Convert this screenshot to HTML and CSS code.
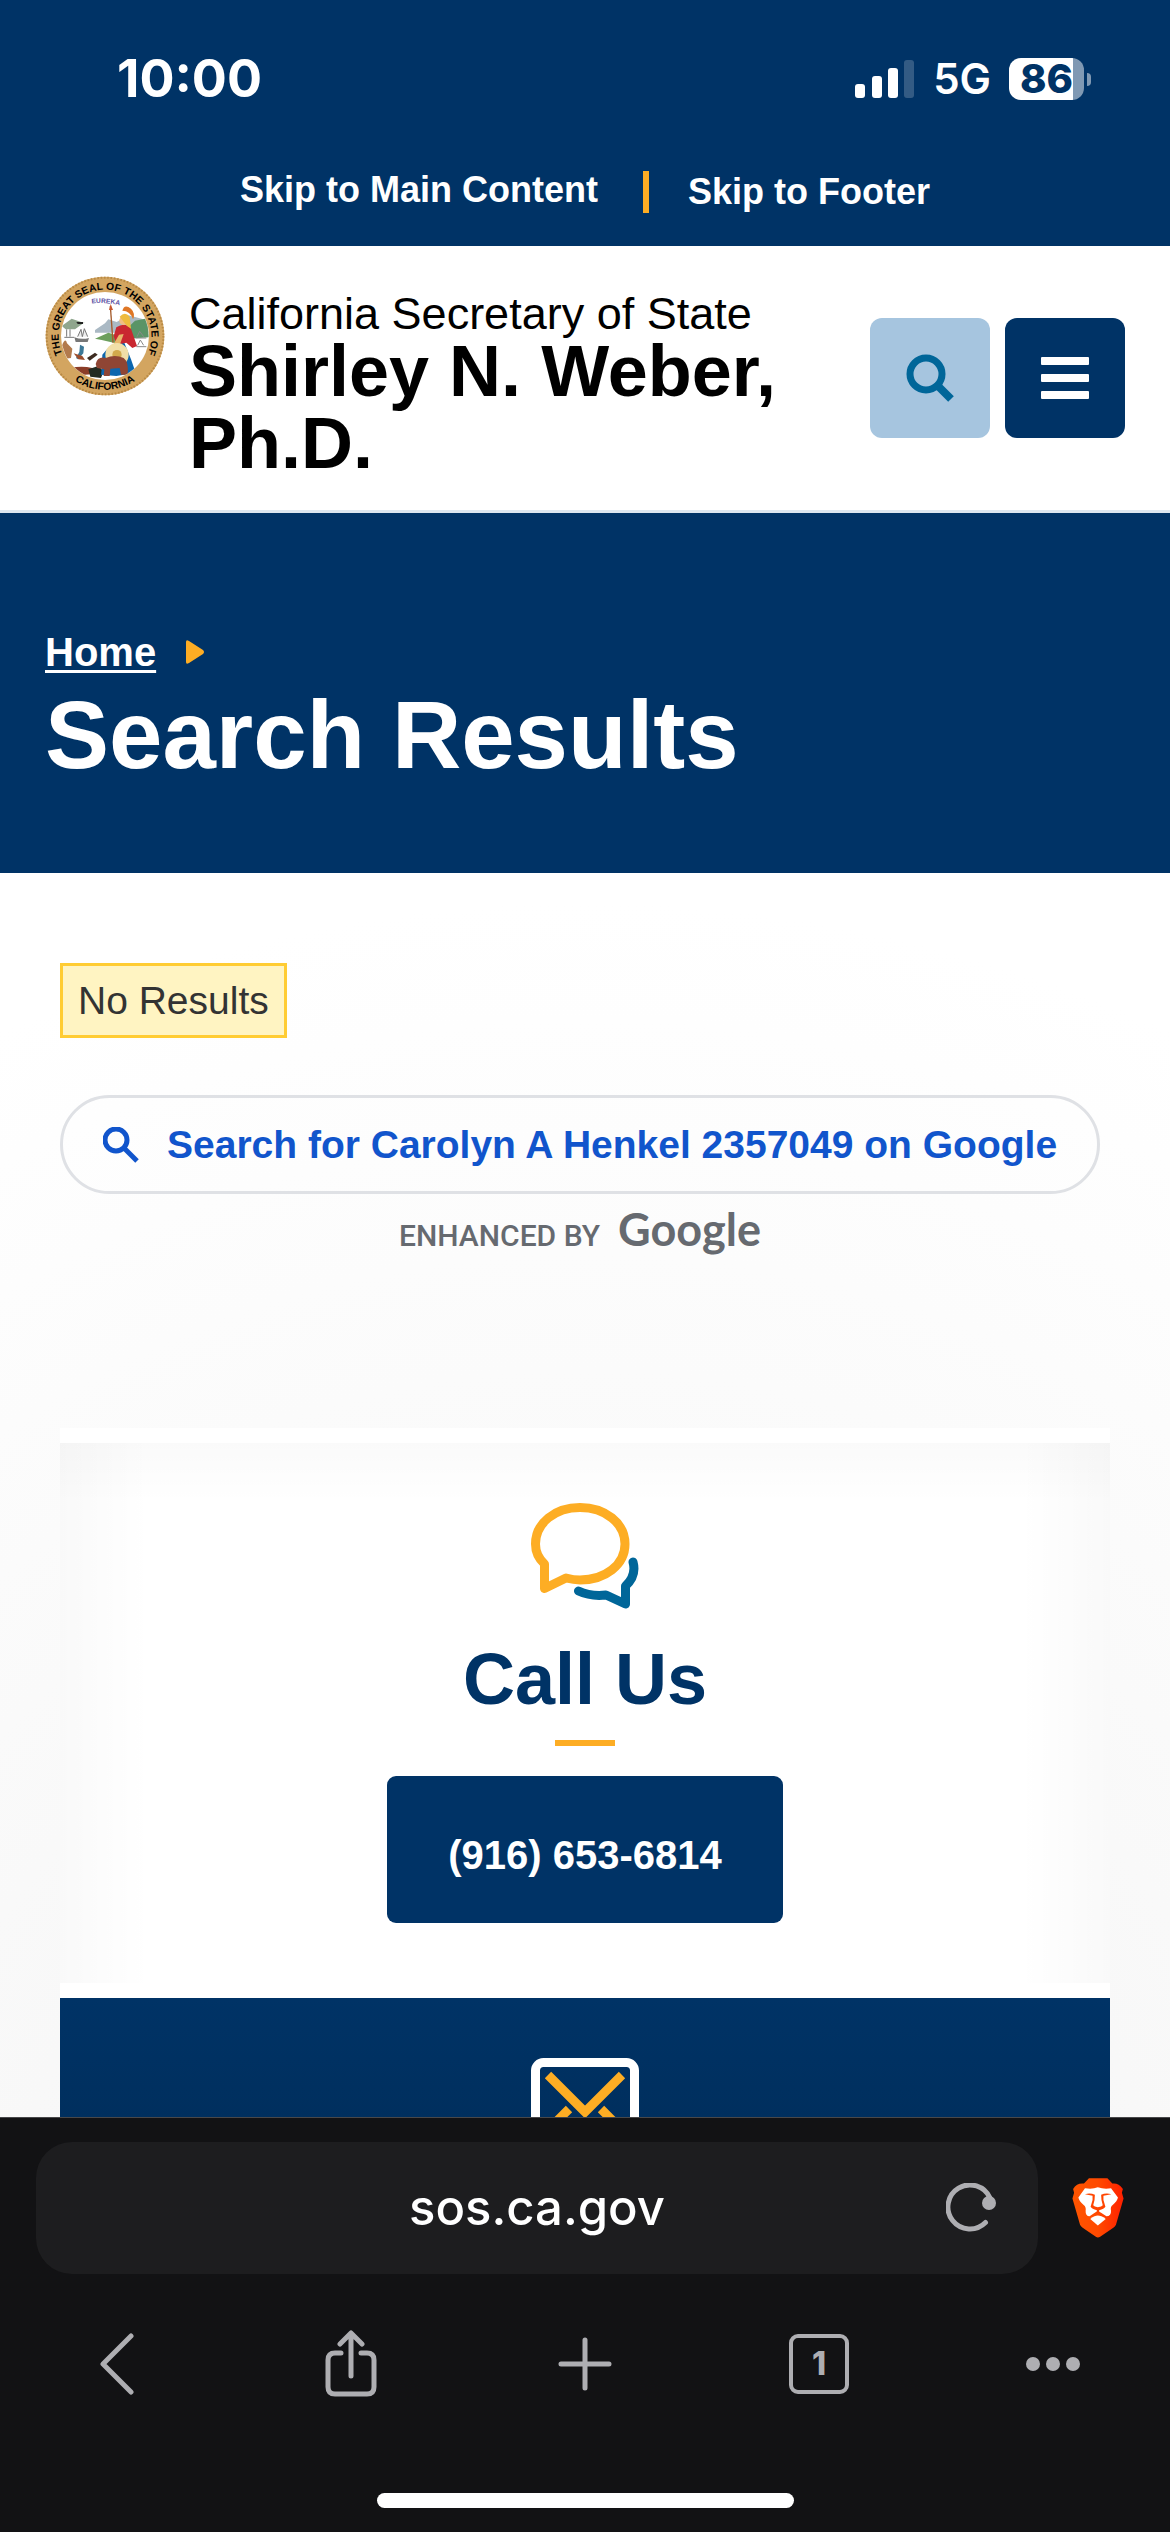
FILE: index.html
```html
<!DOCTYPE html>
<html lang="en">
<head>
<meta charset="utf-8">
<meta name="viewport" content="width=device-width, initial-scale=1">
<title>Search Results | California Secretary of State</title>
<link rel="stylesheet" href="styles.css">
</head>
<body>
<div class="screen">
  <div class="status">
    <span class="time">10:00</span>
    <div class="indicators">
      <svg class="signal" width="60" height="38" viewBox="0 0 60 38" fill="#fff" aria-hidden="true">
        <rect x="0" y="24" width="10" height="14" rx="3"/>
        <rect x="17" y="16" width="10" height="22" rx="3"/>
        <rect x="33" y="8" width="10" height="30" rx="3"/>
        <rect x="49" y="0" width="10" height="38" rx="3" opacity=".2"/>
      </svg>
      <span class="network">5G</span>
      <div class="battery"><span class="level">86</span><span class="tip"></span></div>
    </div>
  </div>

  <div class="webview">
    <nav class="skip" aria-label="Skip links">
      <a class="skip-main" href="#main">Skip to Main Content</a>
      <a class="skip-footer" href="#footer">Skip to Footer</a>
    </nav>

    <header class="header">
      <svg class="seal" width="120" height="120" viewBox="0 0 360 360" role="img" aria-label="Great Seal of the State of California">
        <defs>
          <path id="arc-top" d="M55 241 A139 139 0 1 1 305 241"/>
          <path id="arc-bottom" d="M62 290 A161 161 0 0 0 298 290"/>
          <path id="arc-eureka" d="M132 84 Q178 76 232 90"/>
          <clipPath id="disc"><circle cx="180" cy="180" r="131"/></clipPath>
        </defs>
        <circle cx="180" cy="180" r="178" fill="#d3a560"/>
        <circle cx="180" cy="180" r="175" fill="none" stroke="#b98a45" stroke-width="6" stroke-dasharray="5 5"/>
        <circle cx="180" cy="180" r="132" fill="#fff"/>
        <g clip-path="url(#disc)">
          <path d="M50 150 L80 128 L115 140 L120 138 L90 160 L62 160Z" fill="#8fa68d"/>
          <path d="M94 138h20v6h-16z" fill="#222"/>
          <path d="M150 162 L180 142 L190 130 L215 138 L250 118 L290 128 L322 150 L322 170 L150 170Z" fill="#aab9c4"/>
          <path d="M235 168 L270 134 L300 128 L330 150 L330 182 L230 190Z" fill="#5a9467"/>
          <path d="M150 188 L190 170 L215 178 L212 202 L170 192Z" fill="#6c9f5d"/>
          <path d="M88 184 Q110 192 132 186 L128 198 H92Z" fill="#777"/>
          <path d="M98 182 L108 160 L112 182 M112 182 L118 158 L128 182" fill="#eee" stroke="#777" stroke-width="3"/>
          <path d="M65 160v22M75 160v22M58 184h30" stroke="#777" stroke-width="3"/>
          <path d="M272 186h32M276 182l8-16 12 16M274 212h30M278 208l8-16 10 16" fill="none" stroke="#888" stroke-width="3"/>
          <path d="M50 210 Q62 182 66 202 L82 218 L78 246 L48 250Z" fill="#b27a4c"/>
          <path d="M105 206 l12 6 -2 20 -16 18 -6-4 10-18z" fill="#3c7897"/>
          <path d="M86 232 l14 18 20 2 -8-12z" fill="#9b4d2c"/>
          <path d="M126 246 l24-16 8 6-24 18z" fill="#3d2b20"/>
          <path d="M76 276 Q110 268 142 276 L150 294 L100 298Z" fill="#8b3d28"/>
          <path d="M130 280 L160 270 L176 286 L168 306 L136 302Z" fill="#222b22"/>
          <path d="M170 280 L172 236 Q200 198 238 200 L258 250 L272 290 L214 300 L168 296Z" fill="#0c66ae"/>
          <path d="M214 154 Q240 136 258 158 L276 210 L262 216 L244 200 L214 206 L206 180Z" fill="#c92730"/>
          <path d="M206 204 L222 176 L236 174 L224 208Z" fill="#e7b66a"/>
          <circle cx="216" cy="236" r="35" fill="#f1dfa8"/>
          <circle cx="216" cy="236" r="14" fill="#d2aa4c"/>
          <circle cx="236" cy="134" r="13" fill="#f1bd84"/>
          <path d="M224 122 Q240 104 254 122 L258 158 L246 150Z" fill="#eebb3e"/>
          <path d="M232 104 Q238 82 258 98 Q272 112 264 130 Q256 104 232 104Z" fill="#df7726"/>
          <path d="M196 90 L204 200" stroke="#a45a2a" stroke-width="4"/>
          <path d="M192 102 L197 84 L204 102Z" fill="#c8562d"/>
          <path d="M152 264 Q158 240 182 246 Q210 234 236 246 Q252 258 248 296 H228 L224 276 L196 278 L194 300 H176 L178 280 L156 276Z" fill="#8f4534"/>
        </g>
        <g class="seal-text">
          <text><textPath href="#arc-top" startOffset="50%" text-anchor="middle">THE GREAT SEAL OF THE STATE OF</textPath></text>
          <text><textPath href="#arc-bottom" startOffset="50%" text-anchor="middle">CALIFORNIA</textPath></text>
          <text class="seal-motto"><textPath href="#arc-eureka" startOffset="50%" text-anchor="middle">EUREKA</textPath></text>
        </g>
      </svg>
      <div class="brand">
        <div class="brand-office">California Secretary of State</div>
        <div class="brand-name">Shirley N. Weber, Ph.D.</div>
      </div>
      <div class="header-actions">
        <button class="icon-button icon-button-light" type="button" aria-label="Search">
          <svg width="50" height="50" viewBox="0 0 50 50" fill="none" stroke="#006699" aria-hidden="true">
            <circle cx="21" cy="21" r="16" stroke-width="7"/>
            <path d="M33 33 L46 46" stroke-width="8"/>
          </svg>
        </button>
        <button class="icon-button icon-button-dark" type="button" aria-label="Menu">
          <svg width="48" height="42" viewBox="0 0 48 42" fill="#fff" aria-hidden="true">
            <rect width="48" height="8" rx="1"/><rect y="17" width="48" height="8" rx="1"/><rect y="34" width="48" height="8" rx="1"/>
          </svg>
        </button>
      </div>
    </header>

    <section class="hero">
      <nav class="crumbs" aria-label="Breadcrumb">
        <a href="#">Home</a>
        <svg width="18" height="24" viewBox="0 0 18 24" fill="#fdad24" aria-hidden="true"><path d="M0 2 Q0 -1 3 1 L17 10 Q19 12 17 14 L3 23 Q0 25 0 22Z"/></svg>
      </nav>
      <h1>Search Results</h1>
    </section>

    <main class="main" id="main">
      <p class="no-results">No Results</p>
      <div class="google">
        <a class="google-link" href="#">
          <svg width="36" height="36" viewBox="0 0 36 36" fill="none" stroke="#1155cc" aria-hidden="true">
            <circle cx="13" cy="13" r="11" stroke-width="5"/>
            <path d="M21 21 L34 34" stroke-width="5"/>
          </svg>
          <span>Search for Carolyn A Henkel 2357049 on Google</span>
        </a>
        <div class="enhanced">
          <span class="enhanced-by">ENHANCED BY</span>
          <span class="enhanced-logo">Google</span>
        </div>
      </div>

      <div class="cards">
        <section class="card card-call">
          <svg width="108" height="108" viewBox="0 0 108 108" fill="none" stroke-width="9" stroke-linecap="round" stroke-linejoin="round" aria-hidden="true">
            <path stroke="#fdad24" d="M49 4.500 C74 4.500 94 20 94 41 C94 62 74 77 49 77 C44 77 39 76 35 75 L13.500 85.500 V61 C7 55 4.500 48 4.500 41 C4.500 20 24 4.500 49 4.500Z"/>
            <path stroke="#006699" d="M47.500 88 C57 92.500 66 93 75 92 L94.500 101 V83 C101 77 105 70 102 59"/>
          </svg>
          <h2>Call Us</h2>
          <div class="rule"></div>
          <a class="call-button" href="tel:+19166536814">(916) 653-6814</a>
        </section>
        <section class="card card-mail">
          <svg width="108" height="108" viewBox="0 0 108 108" fill="none" stroke="#fdad24" stroke-width="9" aria-hidden="true">
            <rect x="4.500" y="4.500" width="99" height="99" rx="8" stroke="#fff"/>
            <path d="M17 17 L54 54 L91 17"/>
            <path d="M38 51 L17 72 M70 51 L91 72"/>
          </svg>
        </section>
      </div>
    </main>
  </div>

  <div class="toolbar">
    <div class="address-row">
      <div class="address">
        <input class="address-input" type="text" value="sos.ca.gov" aria-label="Address">
        <button class="plain reload" type="button" aria-label="Reload">
          <svg width="52" height="50" viewBox="0 0 52 50" fill="none" stroke="#aeaeb2" stroke-width="5" stroke-linecap="round" aria-hidden="true">
            <path d="M39.500 39.500 A22 22 0 1 1 44 15"/>
            <circle cx="43" cy="20" r="7" fill="#aeaeb2" stroke="none"/>
          </svg>
        </button>
      </div>
      <button class="plain" type="button" aria-label="Brave Shields">
        <svg width="52" height="60" viewBox="515 203 157 182" aria-hidden="true">
          <defs><linearGradient id="lion"><stop offset="0" stop-color="#ff5500"/><stop offset=".5" stop-color="#ff4a00"/><stop offset="1" stop-color="#ff2000"/></linearGradient></defs>
          <path fill="url(#lion)" d="M566 204 H622 L637 220 Q655 217 669 236 L666 248 L671 265 L648 345 Q645 351 640 354 L600 381 Q593 386 587 381 L547 354 Q541 350 539 345 L516 265 L521 248 L518 236 Q530 217 551 220Z"/>
          <path fill="#fff" d="M554 234 Q576 238 593 231 Q612 238 633 234 L654 262 Q652 273 638 285 Q630 291 633 302 Q634 318 619 319 Q606 310 595 304 Q593 302 591 304 Q581 310 568 319 Q555 318 556 302 Q558 291 550 285 Q536 273 534 262Z"/>
          <path fill="#ff4500" d="M554 252 Q570 247 584 254 L583 270 L579 286 Q582 291 593 292 Q605 291 608 286 L604 270 L603 254 Q617 247 634 252 L610 257 L610 270 L616 290 Q612 296 597 301 V308 H590 V301 Q575 296 571 290 L577 270 L577 257Z"/>
          <path fill="#fff" d="M570 327 Q584 317 593 317 Q603 317 617 327 L593 347Z"/>
        </svg>
      </button>
    </div>
    <nav class="tabs" aria-label="Browser">
      <button class="plain" type="button" aria-label="Back">
        <svg width="34" height="62" viewBox="0 0 34 62"><path d="M31 3 L3 31 L31 59"/></svg>
      </button>
      <button class="plain" type="button" aria-label="Share">
        <svg width="52" height="68" viewBox="0 0 52 68"><path d="M16 23 H10 Q3 23 3 30 V57 Q3 64 10 64 H42 Q49 64 49 57 V30 Q49 23 42 23 H36 M26 46 V4 M15 14 L26 3 L37 14"/></svg>
      </button>
      <button class="plain" type="button" aria-label="New tab">
        <svg width="54" height="54" viewBox="0 0 54 54"><path d="M27 3 V51 M3 27 H51"/></svg>
      </button>
      <button class="plain tab-count" type="button" aria-label="Open tabs"><span>1</span></button>
      <button class="plain" type="button" aria-label="More">
        <svg class="dots" width="54" height="14" viewBox="0 0 54 14"><circle cx="7" cy="7" r="7"/><circle cx="27" cy="7" r="7"/><circle cx="47" cy="7" r="7"/></svg>
      </button>
    </nav>
    <div class="home-bar"></div>
  </div>
</div>
</body>
</html>
```
FILE: styles.css
```css
* { box-sizing: border-box; }

body {
  margin: 0;
  font-family: "Liberation Sans", Arial, sans-serif;
  color: #000;
}

h1, h2, p { margin: 0; }
svg { display: block; flex: none; }
button { font: inherit; cursor: pointer; }

.screen {
  display: flex;
  flex-direction: column;
  height: 100vh;
  background: #003366;
}

/* Phone status bar */
.status {
  flex: none;
  display: flex;
  justify-content: space-between;
  align-items: center;
  height: 109px;
  padding: 49px 79px 0 117px;
  color: #fff;
  font-family: Inter, sans-serif;
}
.time { font-size: 52px; line-height: 60px; font-weight: 700; }
.indicators { display: flex; align-items: center; gap: 18px; }
.network { font-size: 42px; line-height: 60px; font-weight: 600; }
.battery { display: flex; align-items: center; gap: 3px; }
.level {
  width: 75px;
  height: 42px;
  border-radius: 12px;
  background: linear-gradient(to right, #fff 86%, #8099b3 86%);
  color: #003366;
  font-size: 40px;
  line-height: 42px;
  font-weight: 800;
  text-align: center;
}
.tip { width: 4px; height: 13px; border-radius: 0 4px 4px 0; background: #8099b3; }

/* Web page */
.webview {
  flex: 1;
  min-height: 0;
  display: flex;
  flex-direction: column;
  overflow: hidden;
}
.webview > * { flex: none; }

.skip {
  display: flex;
  justify-content: center;
  align-items: flex-start;
  gap: 45px;
  padding: 62px 45px 33px;
  font-size: 36px;
  font-weight: 700;
}
.skip a { color: #fff; text-decoration: none; }
.skip-main { line-height: 38px; }
.skip-footer { line-height: 42px; border-left: 6px solid #fdad24; padding-left: 39px; }

.header {
  display: flex;
  align-items: flex-start;
  padding: 30px 45px;
  background: #fff;
  border-bottom: 3px solid #dde7f0;
}
.seal-text { font-size: 31px; font-weight: 700; }
.seal-motto { font-size: 20px; fill: #5b51a3; }
.brand { flex: 1; padding: 17px 24px 1px; }
.brand-office { font-size: 45px; line-height: 42px; }
.brand-name { font-size: 72px; line-height: 72px; font-weight: 700; }
.header-actions { display: flex; gap: 15px; align-self: center; }
.icon-button {
  display: flex;
  align-items: center;
  justify-content: center;
  width: 120px;
  height: 120px;
  padding: 0;
  border: 0;
  border-radius: 12px;
}
.icon-button-light { background: #a6c5df; }
.icon-button-dark { background: #003366; }

.hero {
  padding: 115px 45px 90px;
  background: #003366;
  color: #fff;
}
.crumbs {
  display: flex;
  align-items: center;
  gap: 30px;
  margin-bottom: 11px;
  font-size: 40px;
  line-height: 48px;
  font-weight: 700;
}
.crumbs a {
  color: #fff;
  text-decoration-thickness: 3px;
  text-underline-offset: 4px;
}
.hero h1 { font-size: 96px; line-height: 96px; }

.main {
  display: flex;
  flex-direction: column;
  align-items: flex-start;
  padding: 90px 60px 0;
  background: #fff radial-gradient(circle at 50% 1430px, #f3f3f3, #fff 1400px);
}
.no-results {
  padding: 12px 15px;
  border: 3px solid #ffcc33;
  background: #fff4c2;
  color: #333;
  font-size: 39px;
  line-height: 45px;
}
.google {
  display: flex;
  flex-direction: column;
  align-items: center;
  margin-top: 57px;
}
.google-link {
  display: flex;
  align-items: center;
  gap: 28px;
  padding: 24px 40px;
  border: 3px solid #dfe1e5;
  border-radius: 50px;
  color: #1155cc;
  font-size: 39px;
  line-height: 45px;
  font-weight: 700;
  text-decoration: none;
  white-space: nowrap;
}
.enhanced {
  display: flex;
  align-items: baseline;
  gap: 18px;
  margin-top: 5px;
  color: #666a70;
}
.enhanced-by { font: 500 30px/60px Roboto, sans-serif; }
.enhanced-logo { font: 700 45px/60px Lato, sans-serif; }

.cards {
  display: flex;
  flex-direction: column;
  gap: 15px;
  align-self: stretch;
  margin-top: 162px;
  padding-top: 15px;
  background: #fff;
}
.card {
  display: flex;
  flex-direction: column;
  align-items: center;
  padding: 60px;
}
.card-call {
  background:
    linear-gradient(to right, rgba(0, 0, 0, .025), transparent 90px, transparent calc(100% - 90px), rgba(0, 0, 0, .025)),
    linear-gradient(rgba(0, 0, 0, .02), transparent 60px),
    #fff;
}
.card-mail { background: linear-gradient(#003366, #002e5c 150px); }
.card h2 { margin-top: 26px; font-size: 72px; line-height: 84px; color: #003366; }
.rule { width: 60px; height: 6px; margin: 19px 0 30px; background: #fdad24; }
.call-button {
  padding: 57px 61px 45px;
  border-radius: 9px;
  background: #003366;
  color: #fff;
  font-size: 40px;
  line-height: 45px;
  font-weight: 700;
  text-decoration: none;
}

/* Browser toolbar */
.toolbar {
  flex: none;
  display: flex;
  flex-direction: column;
  padding: 24px 0;
  border-top: 1px solid #48484a;
  background: #121214;
}
.address-row {
  display: flex;
  align-items: center;
  gap: 34px;
  padding: 0 46px 0 36px;
}
.address {
  flex: 1;
  display: flex;
  align-items: center;
  height: 132px;
  padding: 0 40px;
  border-radius: 36px;
  background: #1d1d1f;
}
.address-input {
  flex: 1;
  min-width: 0;
  padding: 0 0 0 52px;
  border: 0;
  outline: 0;
  background: none;
  color: #fff;
  font: 500 49px/60px Inter, sans-serif;
  text-align: center;
}
.plain {
  display: flex;
  align-items: center;
  justify-content: center;
  padding: 0;
  border: 0;
  background: none;
}
.tabs {
  display: grid;
  grid-template-columns: repeat(5, 1fr);
  justify-items: center;
  align-items: center;
  height: 120px;
  margin: 30px 0 69px;
}
.tabs svg {
  fill: none;
  stroke: #aeaeb2;
  stroke-width: 5;
  stroke-linecap: round;
  stroke-linejoin: round;
}
.tabs .dots { fill: #aeaeb2; stroke: none; }
.tab-count {
  width: 60px;
  height: 60px;
  border: 4px solid #aeaeb2;
  border-radius: 9px;
  color: #aeaeb2;
  font: 800 32px/36px Inter, sans-serif;
}
.home-bar {
  align-self: center;
  width: 36%;
  max-width: 417px;
  height: 15px;
  border-radius: 8px;
  background: #fff;
}
```
